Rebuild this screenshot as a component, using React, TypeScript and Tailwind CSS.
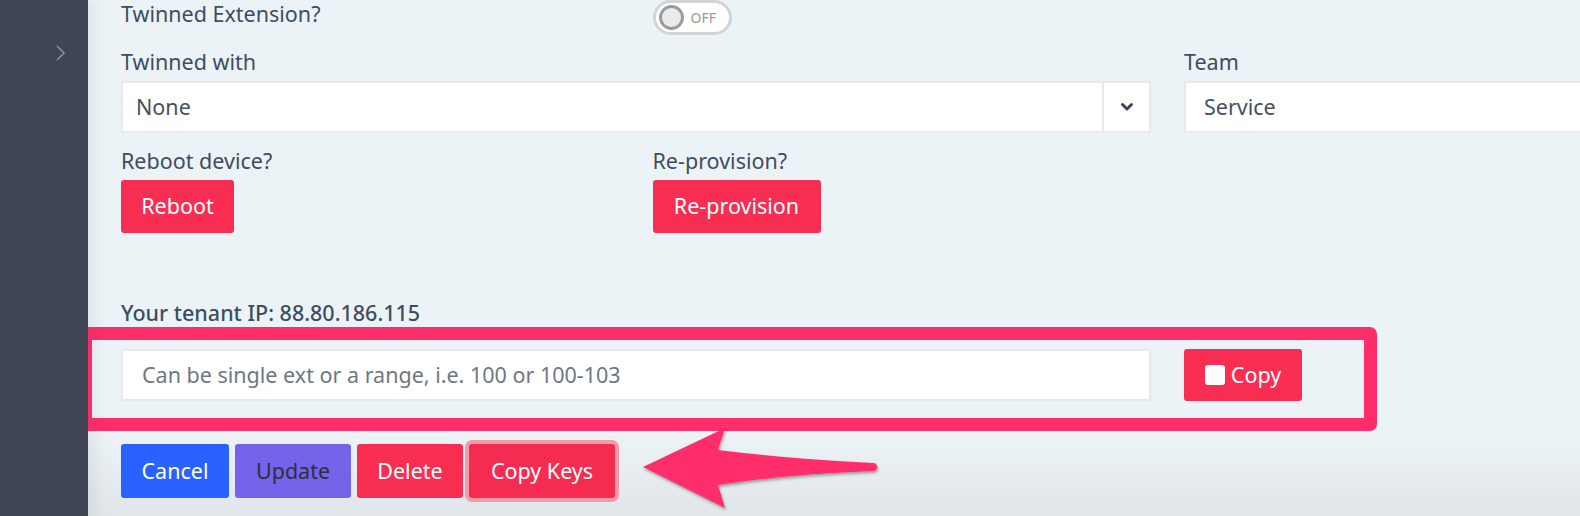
import React from "react";

const font = { fontFamily: "'Noto Sans', 'Open Sans', sans-serif" };

function Chevron() {
  return (
    <svg width="14" height="14" viewBox="0 0 14 14">
      <path d="M2.5 4.5 L7 9 L11.5 4.5" fill="none" stroke="#3d4455" strokeWidth="3" strokeLinecap="round" strokeLinejoin="round" />
    </svg>
  );
}

export default function App() {
  return (
    <div className="flex h-[516px] w-[1580px] overflow-hidden text-[#3e4d60]" style={font}>
      <div className="relative z-10 w-[88px] shrink-0 bg-[#3f4553] shadow-[3px_0_18px_rgba(40,50,70,0.10)]">
        <svg className="absolute left-[54px] top-[44px]" width="14" height="18" viewBox="0 0 14 18">
          <path d="M3 2 L10 9 L3 16" fill="none" stroke="#8a8f9a" strokeWidth="1.6" />
        </svg>
      </div>
      <div className="relative flex-1 bg-[linear-gradient(to_bottom,#ecf3f7_84%,#e0e5e9)] pl-[33px]">
        {/* Row 1 */}
        <div className="grid h-[35px] grid-cols-[1030px_1fr] gap-x-[33px]">
          <div className="grid grid-cols-2 gap-x-[33px]">
            <div className="text-[21.5px] leading-[28px]">Twinned Extension?</div>
            <div>
              <div className="flex h-[35px] w-[79px] items-center rounded-full border-[3px] border-[#d2d4d6] bg-white pl-[3px]">
                <div className="h-[25px] w-[25px] rounded-full border-[3px] border-[#9b9b9b] bg-[#e9ecef]" />
                <span className="ml-[7px] text-[14px] text-[#9a9a9a]">OFF</span>
              </div>
            </div>
          </div>
          <div />
        </div>
        {/* Row 2 */}
        <div className="mt-[13px] grid grid-cols-[1030px_1fr] gap-x-[33px]">
          <div>
            <div className="mb-[5px] text-[21.5px] leading-[28px]">Twinned with</div>
            <div className="flex h-[52px] border-2 border-[#e6eaee] bg-white">
              <div className="flex flex-1 items-center pl-[13px] text-[21.5px] text-[#465063]">None</div>
              <div className="flex w-[47px] items-center justify-center border-l-2 border-[#e6eaee]">
                <Chevron />
              </div>
            </div>
          </div>
          <div>
            <div className="mb-[5px] text-[21.5px] leading-[28px]">Team</div>
            <div className="flex h-[52px] items-center border-y-2 border-l-2 border-[#e6eaee] bg-white pl-[18px] text-[21.5px] text-[#465063]">
              Service
            </div>
          </div>
        </div>
        {/* Row 3 */}
        <div className="mt-[14px] grid w-[1030px] grid-cols-2 gap-x-[33px]">
          <div>
            <div className="mb-[5px] text-[21.5px] leading-[28px]">Reboot device?</div>
            <button className="h-[53px] w-[113px] rounded-[3px] bg-[#f72d52] text-[21.5px] text-white">Reboot</button>
          </div>
          <div>
            <div className="mb-[5px] text-[21.5px] leading-[28px]">Re-provision?</div>
            <button className="h-[53px] w-[168px] rounded-[3px] bg-[#f72d52] text-[21.5px] text-white">Re-provision</button>
          </div>
        </div>
        {/* Tenant IP */}
        <div className="mt-[66px] text-[21.5px] font-medium leading-[28px]">Your tenant IP: 88.80.186.115</div>
        <div className="mt-[22px] grid grid-cols-[1030px_1fr] gap-x-[33px]">
          <div className="flex h-[52px] items-center border-2 border-[#e6eaee] bg-white pl-[19px] text-[21.5px] text-[#6f7782]">
            Can be single ext or a range, i.e. 100 or 100-103
          </div>
          <div>
            <button className="flex h-[52px] w-[118px] items-center justify-center gap-[6px] rounded-[3px] bg-[#f72d52] text-[21.5px] text-white">
              <span className="h-[20px] w-[20px] rounded-[3px] bg-white" />
              Copy
            </button>
          </div>
        </div>
        {/* Bottom buttons */}
        <div className="mt-[43px] flex items-center gap-[6px]">
          <button className="h-[54px] w-[108px] rounded-[3px] bg-[#2962ff] text-[21.5px] text-white">Cancel</button>
          <button className="h-[54px] w-[116px] rounded-[3px] bg-[#7563e9] text-[21.5px] text-[#2e2e3e]">Update</button>
          <button className="h-[54px] w-[106px] rounded-[3px] bg-[#f72d52] text-[21.5px] text-white">Delete</button>
          <button className="h-[54px] w-[146px] rounded-[3px] bg-[#f42c51] text-[21.5px] text-white ring-[4px] ring-[#f59aa7]">Copy Keys</button>
        </div>

        {/* Annotation overlay */}
        <div className="pointer-events-none absolute left-[-9px] top-[327px] h-[104px] w-[1298px] rounded-[7px] border-[13px] border-[#ff2d6a]" />
        <svg className="pointer-events-none absolute left-[-88px] top-0" width="1580" height="516" viewBox="0 0 1580 516">
          <defs>
            <filter id="sh" x="-10%" y="-20%" width="120%" height="150%">
              <feDropShadow dx="1" dy="2" stdDeviation="1.5" floodColor="#000" floodOpacity="0.35" />
            </filter>
          </defs>
          <path
            d="M643 467 L725 428 L718 450 Q790 459 873 463 A4 4 0 0 1 873 471 Q790 474 718 485 L725 508 Z"
            fill="#ff2d6a"
            filter="url(#sh)"
          />
        </svg>
      </div>
    </div>
  );
}
